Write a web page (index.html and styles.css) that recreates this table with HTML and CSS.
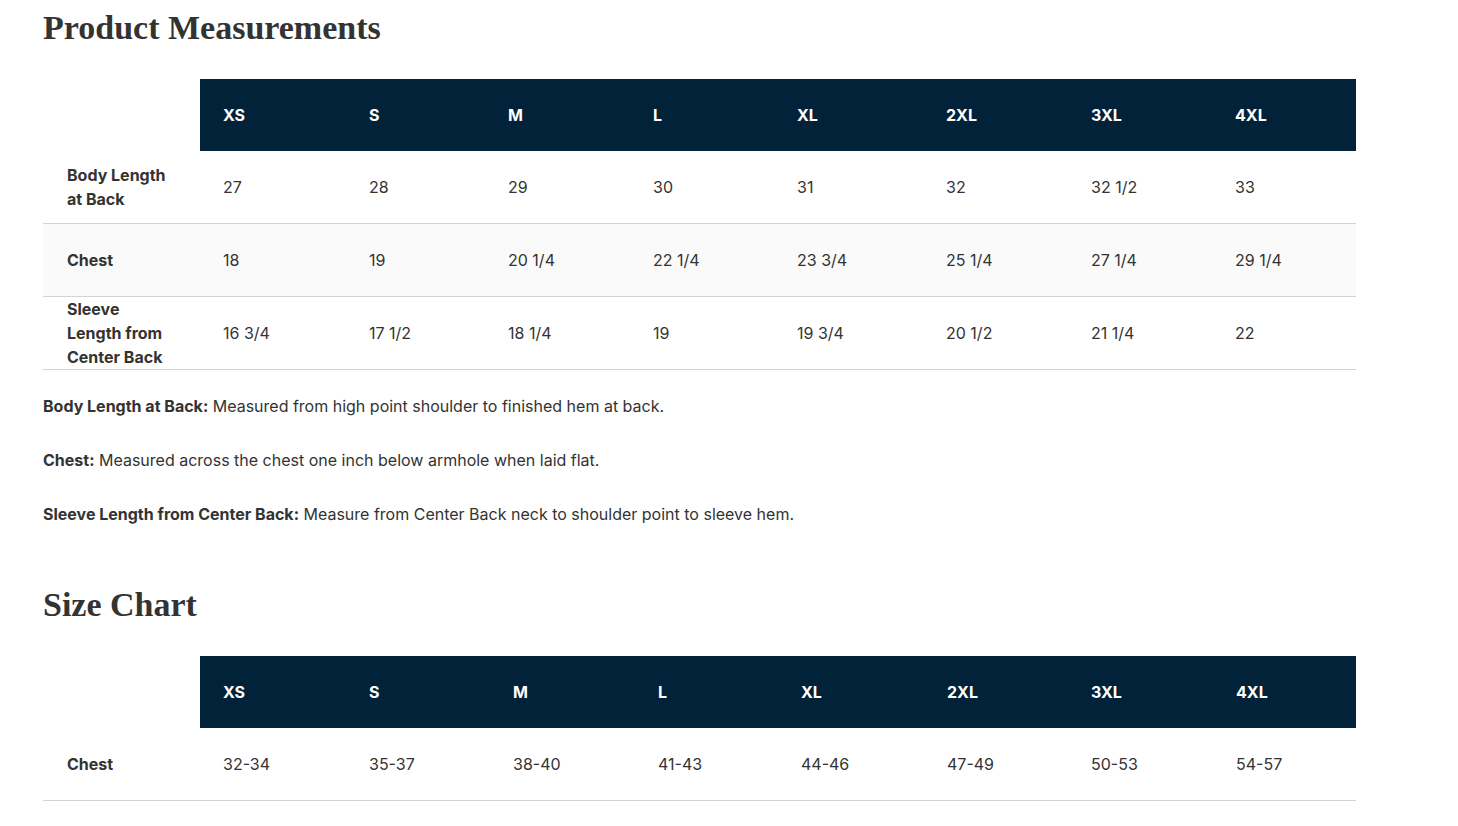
FILE: index.html
```html
<!DOCTYPE html>
<html lang="en">
<head>
<meta charset="utf-8">
<title>Product Measurements</title>
<link rel="stylesheet" href="styles.css">
</head>
<body>
<main class="page">
  <section class="section">
    <h2 class="title">Product Measurements</h2>
    <table class="chart chart-measure">
      <thead>
        <tr>
          <th class="corner"></th>
          <th>XS</th><th>S</th><th>M</th><th>L</th><th>XL</th><th>2XL</th><th>3XL</th><th>4XL</th>
        </tr>
      </thead>
      <tbody>
        <tr>
          <th class="label">Body Length at Back</th>
          <td>27</td><td>28</td><td>29</td><td>30</td><td>31</td><td>32</td><td>32 1/2</td><td>33</td>
        </tr>
        <tr class="alt">
          <th class="label">Chest</th>
          <td>18</td><td>19</td><td>20 1/4</td><td>22 1/4</td><td>23 3/4</td><td>25 1/4</td><td>27 1/4</td><td>29 1/4</td>
        </tr>
        <tr>
          <th class="label">Sleeve Length from Center Back</th>
          <td>16 3/4</td><td>17 1/2</td><td>18 1/4</td><td>19</td><td>19 3/4</td><td>20 1/2</td><td>21 1/4</td><td>22</td>
        </tr>
      </tbody>
    </table>
    <div class="notes">
      <p><strong>Body Length at Back:</strong> Measured from high point shoulder to finished hem at back.</p>
      <p><strong>Chest:</strong> Measured across the chest one inch below armhole when laid flat.</p>
      <p><strong>Sleeve Length from Center Back:</strong> Measure from Center Back neck to shoulder point to sleeve hem.</p>
    </div>
  </section>
  <section class="section section-size">
    <h2 class="title">Size Chart</h2>
    <table class="chart chart-size">
      <thead>
        <tr>
          <th class="corner"></th>
          <th>XS</th><th>S</th><th>M</th><th>L</th><th>XL</th><th>2XL</th><th>3XL</th><th>4XL</th>
        </tr>
      </thead>
      <tbody>
        <tr>
          <th class="label">Chest</th>
          <td>32-34</td><td>35-37</td><td>38-40</td><td>41-43</td><td>44-46</td><td>47-49</td><td>50-53</td><td>54-57</td>
        </tr>
      </tbody>
    </table>
  </section>
</main>
</body>
</html>
```

FILE: styles.css
```css
html, body {
  margin: 0;
  padding: 0;
  background: #ffffff;
}

body {
  font-family: Inter, "Liberation Sans", sans-serif;
  font-size: 16px;
  line-height: 24px;
  color: #333333;
}

.page {
  padding: 0 102px 0 43px;
}

.title {
  margin: 0;
  font-family: "Liberation Serif", "DejaVu Serif", serif;
  font-weight: 700;
  font-size: 34px;
  line-height: 56px;
  color: #333333;
}

.section-size {
  margin-top: 51px;
}

.chart {
  width: 1313px;
  border-collapse: collapse;
  table-layout: fixed;
  margin-top: 23px;
}

.chart th,
.chart td {
  height: 72px;
  padding: 0 10px 0 23px;
  text-align: left;
  vertical-align: middle;
  font-weight: 400;
}

.chart thead th {
  background: #02223a;
  color: #ffffff;
  font-weight: 700;
}

.chart thead th.corner {
  background: #ffffff;
  width: 157px;
  padding: 0;
}

/* column widths (content box; each cell adds 33px of padding) */
.chart-measure thead th:nth-child(2) { width: 113px; }
.chart-measure thead th:nth-child(3) { width: 106px; }
.chart-measure thead th:nth-child(4) { width: 112px; }
.chart-measure thead th:nth-child(5) { width: 111px; }
.chart-measure thead th:nth-child(6) { width: 116px; }
.chart-measure thead th:nth-child(7) { width: 112px; }
.chart-measure thead th:nth-child(8) { width: 111px; }
.chart-measure thead th:nth-child(9) { width: 111px; }

.chart-size thead th:nth-child(2) { width: 113px; }
.chart-size thead th:nth-child(3) { width: 111px; }
.chart-size thead th:nth-child(4) { width: 112px; }
.chart-size thead th:nth-child(5) { width: 110px; }
.chart-size thead th:nth-child(6) { width: 113px; }
.chart-size thead th:nth-child(7) { width: 111px; }
.chart-size thead th:nth-child(8) { width: 112px; }
.chart-size thead th:nth-child(9) { width: 110px; }

.chart tbody tr {
  border-bottom: 1px solid #d4d4d4;
}

.chart tbody tr.alt {
  background: #fafafa;
}

.chart tbody th.label {
  font-weight: 700;
  padding-left: 24px;
  padding-right: 24px;
}

.notes {
  margin-top: 24px;
}

.notes p {
  margin: 0 0 30px 0;
}

.notes p:last-child {
  margin-bottom: 0;
}

.notes strong {
  font-weight: 700;
}
```
